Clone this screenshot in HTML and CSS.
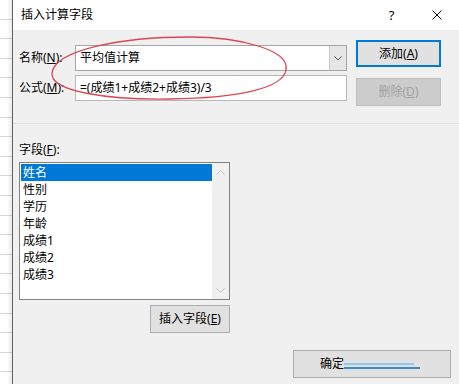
FILE: index.html
```html
<!DOCTYPE html>
<html lang="zh-CN">
<head>
    <meta charset="UTF-8">
    <meta name="viewport" content="width=device-width, initial-scale=1.0">
    <title>插入计算字段</title>
    <link rel="stylesheet" href="styles.css">
</head>
<body>
    <div class="sheet"></div>
    <div class="dialog">
        <div class="titlebar">
            <span class="title">插入计算字段</span>
            <span class="title-btn">?</span>
            <span class="title-btn">
                <svg width="10" height="10" viewBox="0 0 10 10"><path d="M0.5 0.5L9.5 9.5M9.5 0.5L0.5 9.5" stroke="#111" stroke-width="1"/></svg>
            </span>
        </div>

        <div class="content">
            <div class="top">
                <div class="inputs">
                    <div class="row">
                        <span class="label">名称(<u>N</u>):</span>
                        <div class="combo">
                            <span class="value">平均值计算</span>
                            <span class="drop">
                                <svg width="8" height="5" viewBox="0 0 8 5"><path d="M0.5 0.5L4 4L7.5 0.5" fill="none" stroke="#555" stroke-width="1"/></svg>
                            </span>
                        </div>
                    </div>
                    <div class="row">
                        <span class="label">公式(<u>M</u>):</span>
                        <div class="textbox">
                            <span class="value">=(成绩1+成绩2+成绩3)/3</span>
                        </div>
                    </div>
                </div>
                <div class="buttons">
                    <div class="btn btn-default">添加(<u>A</u>)</div>
                    <div class="btn btn-disabled">删除(<u>D</u>)</div>
                </div>
            </div>

            <div class="separator"></div>

            <div class="fields">
                <div class="fields-label">字段(<u>F</u>):</div>
                <div class="listbox">
                    <ul class="items">
                        <li class="selected">姓名</li>
                        <li>性别</li>
                        <li>学历</li>
                        <li>年龄</li>
                        <li>成绩1</li>
                        <li>成绩2</li>
                        <li>成绩3</li>
                    </ul>
                    <div class="scrollbar">
                        <svg width="9" height="5" viewBox="0 0 9 5"><path d="M0.5 4.5L4.5 0.5L8.5 4.5" fill="none" stroke="#c4c4c4" stroke-width="1"/></svg>
                        <svg width="9" height="5" viewBox="0 0 9 5"><path d="M0.5 0.5L4.5 4.5L8.5 0.5" fill="none" stroke="#c4c4c4" stroke-width="1"/></svg>
                    </div>
                </div>
                <div class="btn btn-insert">插入字段(<u>E</u>)</div>
            </div>

            <div class="footer">
                <div class="btn btn-ok">
                    <span>确定</span>
                    <span class="ok-mark">
                        <span class="mark-light"></span>
                        <span class="mark-dark"></span>
                    </span>
                </div>
            </div>
        </div>
    </div>

    <!-- red hand-drawn annotation -->
    <svg class="annotation" width="459" height="384" viewBox="0 0 459 384">
        <path d="M286 70 C290 50 240 37 190 37 C120 37 55 50 52 73 C50 92 110 100 170 99 C240 98 283 88 286 70 Z" fill="none" stroke="#dc4654" stroke-width="1.3"/>
    </svg>
</body>
</html>
```

FILE: styles.css
```css
body {
    margin: 0;
    width: 459px;
    height: 384px;
    overflow: hidden;
    display: flex;
    position: relative;
    font-family: "Noto Sans", "Noto Sans CJK SC", sans-serif;
    font-size: 12px;
    color: #000;
}

.sheet {
    width: 12px;
    flex-shrink: 0;
    background-color: #fff;
    background-image:
        linear-gradient(to right, rgba(255, 255, 255, 0) 55%, rgba(0, 0, 0, 0.08)),
        repeating-linear-gradient(to bottom, transparent 0, transparent 18.6px, #d6d6d6 18.6px, #d6d6d6 19.6px);
}

.dialog {
    flex: 1;
    border-left: 1px solid #5f5f5f;
    background: #f0f0f0;
    display: flex;
    flex-direction: column;
}

.titlebar {
    height: 30px;
    background: #fff;
    display: flex;
    align-items: center;
    padding-left: 8px;
}

.title {
    flex: 1;
    line-height: 16px;
}

.title-btn {
    width: 45px;
    height: 30px;
    display: flex;
    align-items: center;
    justify-content: center;
    font-size: 13px;
}

.content {
    padding: 10px 0 0 6px;
}

.top {
    display: flex;
}

.inputs {
    margin-top: 5px;
}

.row {
    display: flex;
    align-items: center;
    margin-bottom: 4px;
}

.label {
    width: 56px;
    line-height: 16px;
}

.combo, .textbox {
    width: 270px;
    height: 24px;
    border: 1px solid #a5a5a5;
    background: #fff;
    display: flex;
    align-items: center;
}

.textbox {
    border-color: #b8b8b8;
}

.value {
    flex: 1;
    padding-left: 4px;
    line-height: 16px;
}

.drop {
    width: 16px;
    height: 24px;
    background: #e6e6e6;
    border-left: 1px solid #c8c8c8;
    display: flex;
    align-items: center;
    justify-content: center;
}

.buttons {
    margin-left: 9px;
}

.btn {
    box-sizing: border-box;
    height: 27px;
    display: flex;
    align-items: center;
    justify-content: center;
    background: #e1e1e1;
    border: 1px solid #adadad;
    line-height: 16px;
}

.buttons .btn {
    width: 85px;
}

.btn-default {
    border: 2px solid #0078d7;
}

.btn-disabled {
    margin-top: 11px;
    height: 28px;
    background: #cccccc;
    border-color: #bfbfbf;
    color: #a3a3a3;
}

.separator {
    margin-top: 17px;
    margin-left: -6px;
    border-top: 1px solid #e2e2e2;
}

.fields {
    width: 211px;
    display: flex;
    flex-direction: column;
}

.fields-label {
    margin-top: 18px;
    line-height: 16px;
}

.listbox {
    box-sizing: border-box;
    margin-top: 4px;
    height: 138px;
    border: 1px solid #828282;
    background: #fff;
    display: flex;
    padding: 1px 0 1px 1px;
}

.items {
    list-style: none;
    margin: 0;
    padding: 0;
    flex: 1;
}

.items li {
    height: 17px;
    line-height: 17px;
    padding-left: 2px;
}

.items li.selected {
    background: #0078d7;
    color: #fff;
}

.scrollbar {
    width: 17px;
    margin-top: -1px;
    margin-bottom: -1px;
    background: #f0f0f0;
    display: flex;
    flex-direction: column;
    justify-content: space-between;
    align-items: center;
    padding: 7px 0 6px;
}

.btn-insert {
    margin-top: 5px;
    width: 80px;
    height: 28px;
    align-self: flex-end;
}

.footer {
    display: flex;
    justify-content: flex-end;
    padding-right: 8px;
    margin-top: 17px;
}

.btn-ok {
    width: 158px;
    height: 28px;
    justify-content: flex-start;
    padding-left: 26px;
}

.ok-mark {
    display: inline-flex;
    flex-direction: column;
    width: 76px;
    margin-top: 4px;
}

.mark-light {
    width: 70px;
    height: 2px;
    background: #8cc8ec;
}

.mark-dark {
    margin-top: 2px;
    height: 2px;
    background: #3e88c6;
}

.annotation {
    position: absolute;
    top: 0;
    left: 0;
    pointer-events: none;
}
```
